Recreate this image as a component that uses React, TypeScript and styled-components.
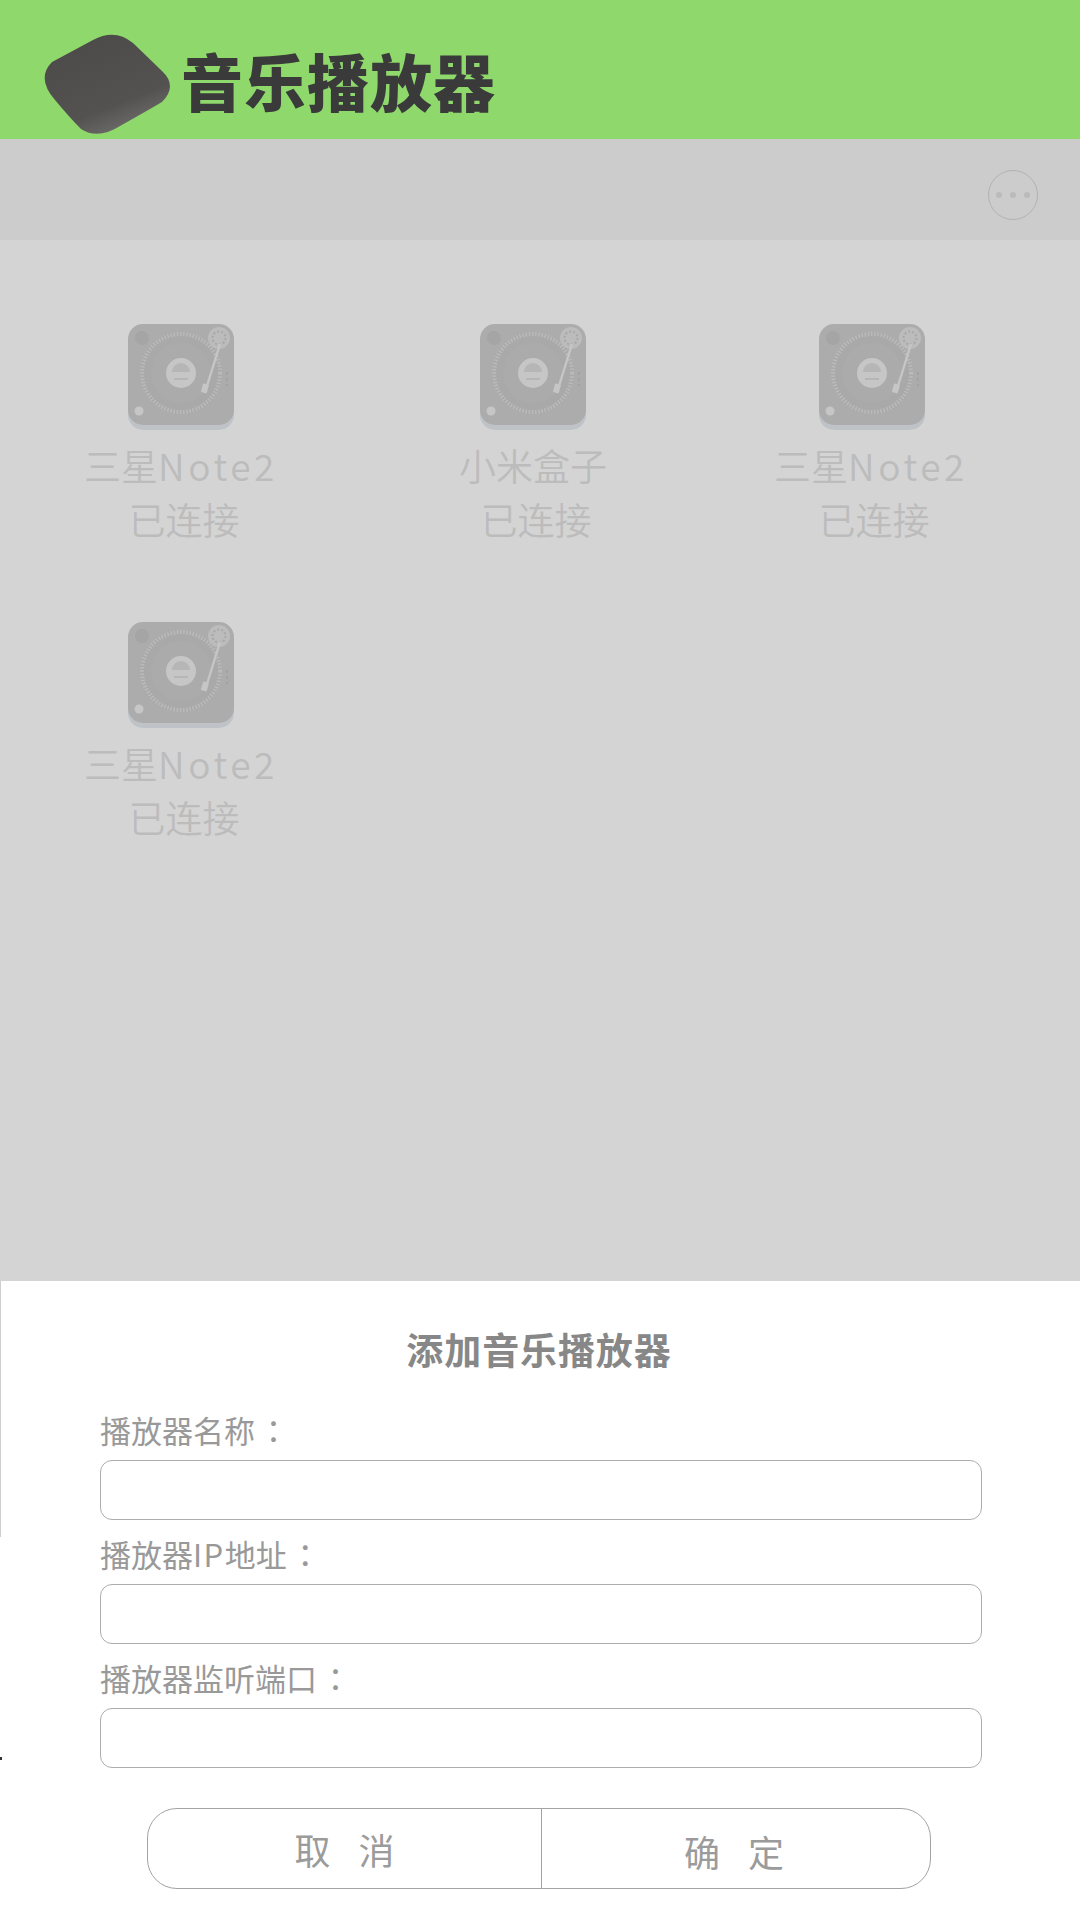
import React from "react";
import styled, { createGlobalStyle } from "styled-components";

const Global = createGlobalStyle`
  html, body { margin: 0; padding: 0; background: #fff; }
  * { box-sizing: border-box; }
  body { font-family: "Noto Sans CJK SC", "Noto Sans", sans-serif; }
`;
const Page = styled.div`
  width: 1080px; height: 1920px; display: flex; flex-direction: column; overflow: hidden;
`;
const Header = styled.header`
  height: 139px; flex: none; background: #8ed86c; display: flex; align-items: flex-start; padding: 30px 0 0 40px;
`;
const Title = styled.h1`
  margin: 15px 0 0 6px; font-size: 62px; line-height: 70px; font-weight: 900; color: #3a3a3a; letter-spacing: 1px;
`;
const Toolbar = styled.div`
  height: 101px; flex: none; background: #cccccc; display: flex; justify-content: flex-end; align-items: flex-start; padding: 31px 42px 0 0;
`;
const MoreButton = styled.button`
  width: 50px; height: 50px; border-radius: 50%; border: 1px solid #b2b2b2; background: transparent; padding: 0;
  display: flex; align-items: center; justify-content: center; gap: 8px;
`;
const Dot = styled.span`
  width: 6px; height: 6px; border-radius: 50%; background: #bbbbbb;
`;
const Content = styled.main`
  flex: 1; background: #d4d4d4; padding-top: 84px;
  display: grid; grid-template-columns: 362px 342px 334px; grid-auto-rows: 298px; align-content: start;
`;
const Player = styled.div`
  display: flex; flex-direction: column; align-items: center;
`;
const Disc = styled.div<{ $shift: number }>`
  width: 106px; height: 107px; margin-left: ${(p) => p.$shift}px;
  & > svg { display: block; filter: blur(0.5px); }
`;
const Name = styled.div`
  font-size: 37px; line-height: 54px; margin-top: 7px; color: #bcbcbc; font-weight: 350; white-space: nowrap;
`;
const NameLatin = styled.span`
  letter-spacing: 3.6px;
`;
const Status = styled(Name)`
  margin-top: 0; margin-left: 6px;
`;
const Sheet = styled.section`
  position: relative; height: 639px; flex: none; background: #fff; padding: 44px 98px 0 100px;
  &::before { content: ""; position: absolute; left: 0; top: 0; width: 1px; height: 256px; background: #cfcfcf; }
  &::after { content: ""; position: absolute; left: 0; top: 476px; width: 2px; height: 3px; background: #333; }
`;
const SheetTitle = styled.h2`
  margin: 0; font-size: 37px; line-height: 48px; font-weight: 700; color: #878787; text-align: center; letter-spacing: .9px; padding-right: 4px;
`;
const Form = styled.form`
  margin-top: 36px; display: flex; flex-direction: column; gap: 13px;
`;
const Field = styled.label`
  display: flex; flex-direction: column; gap: 9px;
`;
const FieldLabel = styled.span`
  font-size: 31px; line-height: 42px; color: #999999; font-weight: 400;
`;
const Latin = styled.span`
  letter-spacing: 1.5px;
`;
const Colon = styled.span`
  margin-left: 3px; font-family: "Noto Sans CJK TC", sans-serif;
`;
const Input = styled.input`
  height: 60px; width: 100%; border: 1px solid #adadad; border-top-width: 1.5px; border-radius: 12px; background: #fff; outline: none;
`;
const Buttons = styled.div`
  margin: 40px 51px 0 47px; height: 81px; display: flex; border: 1px solid #a3a3a3; border-radius: 30px;
`;
const Action = styled.button<{ $right?: boolean; $drop?: number }>`
  flex: ${(p) => (p.$right ? "1" : "0 0 393px")}; background: none; border: none; padding: ${(p) => p.$drop ?? 0}px ${(p) => (p.$right ? 4 : 0)}px 0 0; font-family: inherit; font-size: 36px; line-height: 48px; color: #9b9b9b;
  letter-spacing: 28px; text-indent: 28px; border-left: ${(p) => (p.$right ? "1px solid #a3a3a3" : "none")};
`;

function Logo() {
  return (
    <svg width="135" height="110" viewBox="40 30 135 110">
      <defs>
        <linearGradient id="box" x1="0.1" y1="0" x2="0.6" y2="1">
          <stop offset="0" stopColor="#4b4a48" />
          <stop offset="0.75" stopColor="#535250" />
          <stop offset="0.95" stopColor="#686765" />
          <stop offset="1" stopColor="#8a8986" />
        </linearGradient>
      </defs>
      <path d="M52 62 L93 40 Q115 28 133 43 L162 71 Q178 86 162 102 Q145 112 120 126 Q98 140 81 129 Q70 118 55 100 Q36 78 52 62 Z" fill="url(#box)" />
    </svg>
  );
}

function Turntable() {
  return (
    <svg width="106" height="107" viewBox="0 0 106 107">
      <rect x="0" y="2" width="106" height="104" rx="15" fill="#bfc3c8" />
      <rect x="0" y="0" width="106" height="101" rx="15" fill="#acacac" />
      <circle cx="53" cy="49" r="41" fill="#a9a9a9" />
      <circle cx="53" cy="49" r="39" fill="none" stroke="#bababa" strokeWidth="4" strokeDasharray="1.6 1.6" />
      <circle cx="53" cy="49" r="30" fill="#ababab" />
      <circle cx="53" cy="49" r="15" fill="#c6c6c6" />
      <path d="M44 48 A9 9 0 0 1 62 48 Z" fill="#b6b6b6" />
      <path d="M46 55h14" stroke="#b6b6b6" strokeWidth="2" />
      <circle cx="14" cy="14" r="7" fill="#a5a5a5" />
      <circle cx="11" cy="87" r="4.5" fill="#c6c6c6" />
      <circle cx="91" cy="14" r="11" fill="#bcbcbc" />
      <circle cx="91" cy="14" r="6.5" fill="none" stroke="#a8a8a8" strokeWidth="2" strokeDasharray="2 2" />
      <path d="M92 20 L79 62" stroke="#c6c6c6" strokeWidth="2.4" />
      <rect x="74" y="60" width="6" height="9" rx="1" fill="#c6c6c6" transform="rotate(15 77 64)" />
      <path d="M99 48v14" stroke="#a2a2a2" strokeWidth="2" strokeDasharray="3 3" />
    </svg>
  );
}

const players = [
  { cjk: "三星", latin: "Note2", shift: 0 },
  { cjk: "小米盒子", latin: "", shift: 0 },
  { cjk: "三星", latin: "Note2", shift: 2 },
  { cjk: "三星", latin: "Note2", shift: 0 },
];

export default function App() {
  return (
    <Page>
      <Global />
      <Header>
        <Logo />
        <Title>音乐播放器</Title>
      </Header>
      <Toolbar>
        <MoreButton aria-label="more">
          <Dot />
          <Dot />
          <Dot />
        </MoreButton>
      </Toolbar>
      <Content>
        {players.map((p, i) => (
          <Player key={i}>
            <Disc $shift={p.shift}>
              <Turntable />
            </Disc>
            <Name>{p.cjk}<NameLatin>{p.latin}</NameLatin></Name>
            <Status>已连接</Status>
          </Player>
        ))}
      </Content>
      <Sheet>
        <SheetTitle>添加音乐播放器</SheetTitle>
        <Form>
          <Field>
            <FieldLabel>播放器名称<Colon>：</Colon></FieldLabel>
            <Input />
          </Field>
          <Field>
            <FieldLabel>播放器<Latin>IP</Latin>地址<Colon>：</Colon></FieldLabel>
            <Input />
          </Field>
          <Field>
            <FieldLabel>播放器监听端口<Colon>：</Colon></FieldLabel>
            <Input />
          </Field>
        </Form>
        <Buttons>
          <Action type="button">取消</Action>
          <Action type="button" $right $drop={4}>确定</Action>
        </Buttons>
      </Sheet>
    </Page>
  );
}
